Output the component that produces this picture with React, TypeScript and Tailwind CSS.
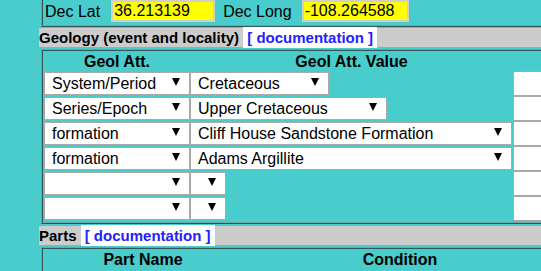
import React from 'react';

const font = "font-['Liberation_Sans',Arial,sans-serif]";

function Arrow() {
  return (
    <svg width="8" height="8" viewBox="0 0 8 8" className="shrink-0 mb-[4px]">
      <polygon points="0,0 8,0 4,8" fill="#000" />
    </svg>
  );
}

function Select({ value, className }: { value: string; className: string }) {
  return (
    <div className={`h-[23px] my-px flex items-center justify-between bg-white border border-[#a9a9a9] pl-[7px] pr-[9px] text-[16px] leading-[18px] text-black whitespace-nowrap ${className}`}>
      <span>{value}</span>
      <Arrow />
    </div>
  );
}

function SectionHeader({ title }: { title: string }) {
  return (
    <div className="bg-[#cccccc] text-[15px] leading-[19px] font-bold text-black whitespace-nowrap">
      {title}{' '}
      <span className="bg-white py-[2px] px-[4px] text-[#2222ff]">[ documentation ]</span>
    </div>
  );
}

const rows = [
  { att: 'System/Period', value: 'Cretaceous', w: 'w-[139px]' },
  { att: 'Series/Epoch', value: 'Upper Cretaceous', w: 'w-[197px]' },
  { att: 'formation', value: 'Cliff House Sandstone Formation', w: 'w-[322px]' },
  { att: 'formation', value: 'Adams Argillite', w: 'w-[322px]' },
  { att: '', value: '', w: 'w-[36px]' },
  { att: '', value: '', w: 'w-[36px]' },
];

export default function App() {
  return (
    <div className={`w-[541px] h-[271px] overflow-hidden bg-[#48cccc] ${font}`}>
      <div className="w-[720px] ml-[39px]">
        {/* locality coordinates */}
        <div className="ml-[2px] pl-[1px] pb-[2px] border-l-2 border-b-2 [border-style:ridge] border-[#6aa8a8]">
          <div className="h-[23px] flex items-center text-[16px] text-black">
            <span className="ml-[1px]">Dec Lat</span>
            <div className="ml-[11px] w-[104px] h-[22px] mb-[1px] border-2 border-[#cfcfcf] bg-[#ffff00] pl-px flex items-center">36.213139</div>
            <span className="ml-[8px]">Dec Long</span>
            <div className="ml-[10px] w-[107px] h-[22px] mb-[1px] border-2 border-[#cfcfcf] bg-[#ffff00] pl-px flex items-center">-108.264588</div>
          </div>
        </div>

        <div className="mt-px">
          <SectionHeader title="Geology (event and locality)" />
        </div>

        <div className="mt-[2px] ml-[2px] pl-[1px] pb-px border-l-2 border-t-2 border-b-2 [border-style:ridge] border-[#6aa8a8]">
          <div className="flex h-[20px] pt-[2px] text-[16px] leading-[18px] font-bold text-black">
            <div className="w-[146px] text-center">Geol Att.</div>
            <div className="w-[323px] text-center">Geol Att. Value</div>
          </div>
          {rows.map((r, i) => (
            <div key={i} className="flex h-[25px]">
              <div className="w-[146px]">
                <Select value={r.att} className="w-[146px]" />
              </div>
              <div className="w-[323px]">
                <Select value={r.value} className={r.w} />
              </div>
              <div className="w-[120px] h-[25px] border border-[#a9a9a9] bg-white" />
            </div>
          ))}
        </div>

        <div className="mt-[2px]">
          <SectionHeader title="Parts" />
        </div>

        <div className="mt-[2px] ml-[2px] pl-[1px] h-[40px] border-l-2 border-t-2 [border-style:ridge] border-[#6aa8a8]">
          <div className="flex pt-[2px] text-[16px] leading-[18px] font-bold text-black">
            <div className="w-[198px] text-center">Part Name</div>
            <div className="w-[316px] text-center">Condition</div>
          </div>
        </div>
      </div>
    </div>
  );
}
